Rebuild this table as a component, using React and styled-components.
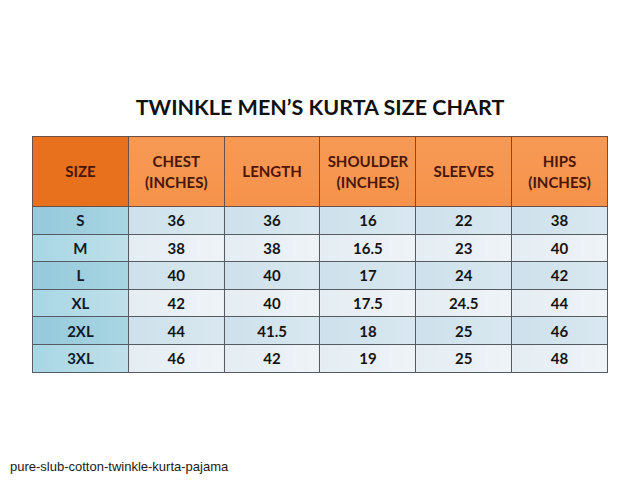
import React from 'react'
import styled, { createGlobalStyle } from 'styled-components'

const GlobalStyle = createGlobalStyle`
  html, body {
    margin: 0;
    padding: 0;
    background: #ffffff;
  }
`

const Page = styled.div`
  width: 640px;
  height: 480px;
  display: flex;
  flex-direction: column;
  background: #ffffff;
  overflow: hidden;
`

const Title = styled.h1`
  margin: 94px 0 0;
  font-family: Lato, "Open Sans", sans-serif;
  font-weight: 700;
  font-size: 21.5px;
  line-height: 27px;
  text-align: center;
  color: #111111;
`

const Chart = styled.table`
  margin: 15px 0 0 32px;
  width: 576px;
  border-collapse: collapse;
  table-layout: fixed;
  font-family: Lato, "Open Sans", sans-serif;
  font-weight: 700;
  border: 1.5px solid #6e6e6e;
`

const HeadCell = styled.th`
  height: 69px;
  padding: 0;
  font-size: 15px;
  line-height: 21px;
  font-weight: 700;
  color: #4a1608;
  text-align: center;
  background: ${p => (p.$dark ? '#e8711e' : 'linear-gradient(180deg, #f79a55 0%, #f6924a 100%)')};
  border: 1.5px solid #6a5048;
`

const Cell = styled.td`
  height: 26.6px;
  padding: 0;
  font-size: 15px;
  color: #141414;
  text-align: center;
  border: 1.5px solid #555b60;
  background: ${p => (p.$odd
    ? 'linear-gradient(90deg, #cde0eb 0%, #d9e8f0 100%)'
    : 'linear-gradient(90deg, #e4edf3 0%, #eef3f7 100%)')};
`

const SizeCell = styled(Cell)`
  color: #111a2a;
  background: ${p => (p.$odd
    ? 'linear-gradient(90deg, #94c9db 0%, #a9d5e3 100%)'
    : 'linear-gradient(90deg, #a8d6e4 0%, #bfe0ea 100%)')};
`

const Footer = styled.div`
  margin-top: auto;
  padding: 0 0 6px 10px;
  font-family: "Liberation Sans", Arial, sans-serif;
  font-size: 13px;
  color: #1a1a1a;
`

const headers = [
  ['SIZE'],
  ['CHEST', '(INCHES)'],
  ['LENGTH'],
  ['SHOULDER', '(INCHES)'],
  ['SLEEVES'],
  ['HIPS', '(INCHES)'],
]

const rows = [
  ['S', '36', '36', '16', '22', '38'],
  ['M', '38', '38', '16.5', '23', '40'],
  ['L', '40', '40', '17', '24', '42'],
  ['XL', '42', '40', '17.5', '24.5', '44'],
  ['2XL', '44', '41.5', '18', '25', '46'],
  ['3XL', '46', '42', '19', '25', '48'],
]

export default function App() {
  return (
    <Page>
      <GlobalStyle />
      <Title>TWINKLE MEN’S KURTA SIZE CHART</Title>
      <Chart>
        <thead>
          <tr>
            {headers.map((h, i) => (
              <HeadCell key={i} $dark={i === 0}>
                {h.map((line, j) => (
                  <React.Fragment key={j}>
                    {j > 0 && <br />}
                    {line}
                  </React.Fragment>
                ))}
              </HeadCell>
            ))}
          </tr>
        </thead>
        <tbody>
          {rows.map((row, r) => (
            <tr key={row[0]}>
              <SizeCell $odd={r % 2 === 0}>{row[0]}</SizeCell>
              {row.slice(1).map((v, c) => (
                <Cell key={c} $odd={r % 2 === 0}>{v}</Cell>
              ))}
            </tr>
          ))}
        </tbody>
      </Chart>
      <Footer>pure-slub-cotton-twinkle-kurta-pajama</Footer>
    </Page>
  )
}
